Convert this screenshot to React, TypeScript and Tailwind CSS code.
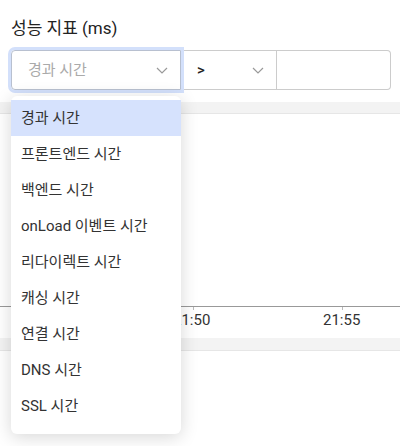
const items = [
  '경과 시간',
  '프론트엔드 시간',
  '백엔드 시간',
  'onLoad 이벤트 시간',
  '리다이렉트 시간',
  '캐싱 시간',
  '연결 시간',
  'DNS 시간',
  'SSL 시간',
];

const Chevron = () => (
  <svg width="12" height="7" viewBox="0 0 12 7" fill="none">
    <path d="M1 1l5 5 5-5" stroke="#999" strokeWidth="1.2" />
  </svg>
);

const App = () => {
  return (
    <div
      className="relative w-[400px] h-[446px] overflow-hidden bg-white text-[#333]"
      style={{ fontFamily: "Roboto, 'Noto Sans CJK KR', sans-serif" }}
    >
      <div className="pl-[11px] pr-[9px] pt-4">
        <h2 className="text-[17px] leading-6 text-[#222]">성능 지표 (ms)</h2>
        <div className="mt-[10px] flex h-10">
          <div className="relative z-10 flex w-[170px] items-center justify-between rounded-l border border-[#b8c0d0] pl-4 pr-3 ring-[3px] ring-[#d3e0fb]">
            <span className="text-[15px] text-[#aaa]">경과 시간</span>
            <Chevron />
          </div>
          <div className="flex w-[96px] items-center justify-between border-y border-r border-[#ccc] pl-4 pr-3">
            <span className="text-[15px] font-medium text-[#222]">&gt;</span>
            <Chevron />
          </div>
          <div className="flex-1 rounded-r border-y border-r border-[#ccc]" />
        </div>
      </div>

      <div className="mt-3 h-3 border-b border-[#e6e6e6] bg-[#f3f3f3]" />
      <div className="h-[192px]" />
      <div className="relative h-[32px] border-t border-[#999]">
        <div className="absolute left-[193px] top-0 h-[3px] w-px bg-[#bbb]" />
        <div className="absolute left-[342px] top-0 h-[3px] w-px bg-[#bbb]" />
        <span className="absolute left-[173px] top-[2px] text-[15px] text-[#333]">21:50</span>
        <span className="absolute left-[323px] top-[2px] text-[15px] text-[#333]">21:55</span>
      </div>
      <div className="h-[13px] border-b border-[#e6e6e6] bg-[#f3f3f3]" />

      <ul className="absolute left-[11px] top-[96px] z-20 w-[170px] rounded-md bg-white pt-1 pb-[10px] shadow-[0_3px_18px_rgba(0,0,0,0.16)]">
        {items.map((item, i) => (
          <li
            key={item}
            className={
              'flex h-9 items-center px-[10px] text-[15px] text-[#333] ' +
              (i === 0 ? 'bg-[#d6e2fd]' : '')
            }
          >
            {item}
          </li>
        ))}
      </ul>
    </div>
  );
};

export default App;
